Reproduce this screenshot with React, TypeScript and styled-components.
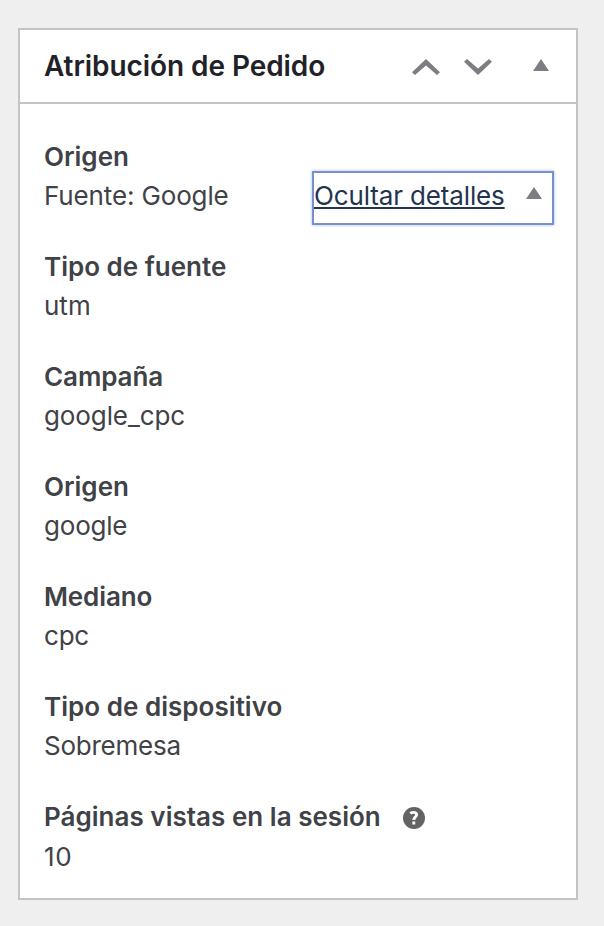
import React from 'react';
import styled, { createGlobalStyle } from 'styled-components';

const GlobalStyle = createGlobalStyle`
  *, *::before, *::after { box-sizing: border-box; }
  body {
    margin: 0;
    background: #efefef;
    font-family: Inter, "Liberation Sans", sans-serif;
    color: #3f4247;
  }
`;

const Page = styled.main`
  height: 926px;
  padding: 28px 26px 26px 18px;
  background: #efefef;
`;

const Panel = styled.section`
  width: 560px;
  height: 872px;
  border: 2px solid #c3c4c7;
  background: #fff;
`;

const Header = styled.header`
  display: flex;
  align-items: center;
  height: 74px;
  padding: 0 27px 0 24px;
  border-bottom: 2px solid #c3c4c7;
`;

const Fit = styled.span<{ $spacing: number }>`
  letter-spacing: ${(p) => p.$spacing}px;
  white-space: nowrap;
`;

const Title = styled.h2`
  flex: 1;
  margin: 0;
  font-size: 28px;
  line-height: 40px;
  font-weight: 600;
  color: #1f2328;
`;

const Actions = styled.div`
  display: flex;
  align-items: flex-start;
  padding-top: 2px;
`;

const IconButton = styled.button<{ $gap?: number }>`
  display: flex;
  padding: 0;
  margin-left: ${(p) => p.$gap ?? 0}px;
  border: 0;
  background: none;
  color: #7c7e83;
`;

const Body = styled.div`
  padding: 33px 22px 0 24px;
`;

const Entry = styled.div`
  height: 110px;
`;

const Label = styled.h4`
  display: flex;
  align-items: center;
  gap: 22.5px;
  height: 39px;
  margin: 0;
  font-size: 26px;
  font-weight: 600;

  svg {
    margin-top: 3px;
  }
`;

const ValueRow = styled.div<{ $drop?: boolean }>`
  display: flex;
  justify-content: space-between;
  height: 40px;
  padding-top: ${(p) => (p.$drop ? 1 : 0)}px;
  font-size: 26px;
  line-height: 40px;
`;

const DetailsLink = styled.a`
  display: flex;
  justify-content: space-between;
  width: 242px;
  height: 54px;
  margin-top: -5px;
  padding: 3px 10px 0 0;
  border: 2px solid #7991c8;
  box-shadow: 0 0 3px #9db8f5;
  color: #24344f;
  text-decoration: none;

  svg {
    margin-top: 11px;
    color: #7b7d83;
  }
`;

const LinkText = styled(Fit)`
  text-decoration: underline;
  text-decoration-thickness: 2px;
  text-underline-offset: 2px;
  text-decoration-skip-ink: none;
`;

type Item = { label: string; value: string; ls: number; vs: number; link?: boolean; help?: boolean };

const items: Item[] = [
  { label: 'Origen', value: 'Fuente: Google', ls: 0, vs: -0.14, link: true },
  { label: 'Tipo de fuente', value: 'utm', ls: 0, vs: 0 },
  { label: 'Campaña', value: 'google_cpc', ls: -0.1, vs: -0.1 },
  { label: 'Origen', value: 'google', ls: 0, vs: -0.2 },
  { label: 'Mediano', value: 'cpc', ls: -0.12, vs: -0.2 },
  { label: 'Tipo de dispositivo', value: 'Sobremesa', ls: 0.03, vs: -0.24 },
  { label: 'Páginas vistas en la sesión', value: '10', ls: 0.02, vs: 0.6, help: true },
];

const Chevron = ({ down = false }: { down?: boolean }) => (
  <svg width="28" height="16" viewBox="0 0 28 16" fill="currentColor">
    <path d={down ? 'M3 0L14 9.6L25 0L28 2.8L14 16L0 2.8Z' : 'M3 16L14 6.4L25 16L28 13.2L14 0L0 13.2Z'} />
  </svg>
);

const Triangle = () => (
  <svg width="16" height="12" viewBox="0 0 16 12" fill="currentColor">
    <path d="M8 0L16 12H0Z" />
  </svg>
);

const Help = () => (
  <svg width="22" height="22" viewBox="0 0 22 22">
    <circle cx="11" cy="11" r="11" fill="#636363" />
    <path d="M7.3 6.5C9.2 4.9 13.6 4.7 13.6 7.8C13.6 10 10.8 9.9 10.8 13M10.8 14.5V17.6" fill="none" stroke="#fff" strokeWidth="2.9" />
  </svg>
);

export default function App() {
  return (
    <Page>
      <GlobalStyle />
      <Panel>
        <Header>
          <Title><Fit $spacing={-0.07}>Atribución de Pedido</Fit></Title>
          <Actions>
            <IconButton aria-label="Subir"><Chevron /></IconButton>
            <IconButton aria-label="Bajar" $gap={24}><Chevron down /></IconButton>
            <IconButton aria-label="Contraer" $gap={41}><Triangle /></IconButton>
          </Actions>
        </Header>
        <Body>
          {items.map((it, i) => (
            <Entry key={i}>
              <Label><Fit $spacing={it.ls}>{it.label}</Fit>{it.help && <Help />}</Label>
              <ValueRow $drop={it.help}>
                <Fit $spacing={it.vs}>{it.value}</Fit>
                {it.link && <DetailsLink><LinkText $spacing={-0.14}>Ocultar detalles</LinkText><Triangle /></DetailsLink>}
              </ValueRow>
            </Entry>
          ))}
        </Body>
      </Panel>
    </Page>
  );
}
